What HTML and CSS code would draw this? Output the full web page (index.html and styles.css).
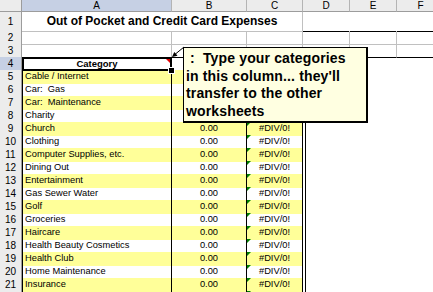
FILE: index.html
```html
<!DOCTYPE html>
<html>
<head>
  <title>Out of Pocket and Credit Card Expenses</title>
  <link rel="stylesheet" href="styles.css">
</head>
<body>
  <div class="sheet">
    <div class="row head">
      <div class="corner"></div>
      <div class="col sel">A</div>
      <div class="col">B</div>
      <div class="col">C</div>
      <div class="col">D</div>
      <div class="col">E</div>
      <div class="col">F</div>
    </div>

    <div class="row r1">
      <div class="num">1</div>
      <div class="cell title">Out of Pocket and Credit Card Expenses</div>
      <div class="cell side"></div>
    </div>
    <div class="row">
      <div class="num">2</div>
      <div class="cell"></div><div class="cell"></div><div class="cell"></div>
      <div class="cell"></div><div class="cell"></div><div class="cell"></div>
    </div>
    <div class="row r3">
      <div class="num">3</div>
      <div class="cell"></div><div class="cell"></div><div class="cell"></div>
      <div class="cell"></div><div class="cell"></div><div class="cell"></div>
    </div>

    <div class="row r4">
      <div class="num sel">4</div>
      <div class="cell a active">Category</div>
      <div class="cell b"></div>
      <div class="cell c"></div>
      <div class="edge"></div><div></div><div></div>
    </div>

    <div class="row alt">
      <div class="num">5</div>
      <div class="cell a">Cable / Internet</div><div class="cell b">0.00</div><div class="cell c">#DIV/0!</div>
      <div class="edge"></div><div></div><div></div>
    </div>
    <div class="row">
      <div class="num">6</div>
      <div class="cell a">Car:&nbsp; Gas</div><div class="cell b">0.00</div><div class="cell c">#DIV/0!</div>
      <div class="edge"></div><div></div><div></div>
    </div>
    <div class="row alt">
      <div class="num">7</div>
      <div class="cell a">Car:&nbsp; Maintenance</div><div class="cell b">0.00</div><div class="cell c">#DIV/0!</div>
      <div class="edge"></div><div></div><div></div>
    </div>
    <div class="row">
      <div class="num">8</div>
      <div class="cell a">Charity</div><div class="cell b">0.00</div><div class="cell c">#DIV/0!</div>
      <div class="edge"></div><div></div><div></div>
    </div>
    <div class="row alt">
      <div class="num">9</div>
      <div class="cell a">Church</div><div class="cell b">0.00</div><div class="cell c">#DIV/0!</div>
      <div class="edge"></div><div></div><div></div>
    </div>
    <div class="row">
      <div class="num">10</div>
      <div class="cell a">Clothing</div><div class="cell b">0.00</div><div class="cell c">#DIV/0!</div>
      <div class="edge"></div><div></div><div></div>
    </div>
    <div class="row alt">
      <div class="num">11</div>
      <div class="cell a">Computer Supplies, etc.</div><div class="cell b">0.00</div><div class="cell c">#DIV/0!</div>
      <div class="edge"></div><div></div><div></div>
    </div>
    <div class="row">
      <div class="num">12</div>
      <div class="cell a">Dining Out</div><div class="cell b">0.00</div><div class="cell c">#DIV/0!</div>
      <div class="edge"></div><div></div><div></div>
    </div>
    <div class="row alt">
      <div class="num">13</div>
      <div class="cell a">Entertainment</div><div class="cell b">0.00</div><div class="cell c">#DIV/0!</div>
      <div class="edge"></div><div></div><div></div>
    </div>
    <div class="row">
      <div class="num">14</div>
      <div class="cell a">Gas Sewer Water</div><div class="cell b">0.00</div><div class="cell c">#DIV/0!</div>
      <div class="edge"></div><div></div><div></div>
    </div>
    <div class="row alt">
      <div class="num">15</div>
      <div class="cell a">Golf</div><div class="cell b">0.00</div><div class="cell c">#DIV/0!</div>
      <div class="edge"></div><div></div><div></div>
    </div>
    <div class="row">
      <div class="num">16</div>
      <div class="cell a">Groceries</div><div class="cell b">0.00</div><div class="cell c">#DIV/0!</div>
      <div class="edge"></div><div></div><div></div>
    </div>
    <div class="row alt">
      <div class="num">17</div>
      <div class="cell a">Haircare</div><div class="cell b">0.00</div><div class="cell c">#DIV/0!</div>
      <div class="edge"></div><div></div><div></div>
    </div>
    <div class="row">
      <div class="num">18</div>
      <div class="cell a">Health Beauty Cosmetics</div><div class="cell b">0.00</div><div class="cell c">#DIV/0!</div>
      <div class="edge"></div><div></div><div></div>
    </div>
    <div class="row alt">
      <div class="num">19</div>
      <div class="cell a">Health Club</div><div class="cell b">0.00</div><div class="cell c">#DIV/0!</div>
      <div class="edge"></div><div></div><div></div>
    </div>
    <div class="row">
      <div class="num">20</div>
      <div class="cell a">Home Maintenance</div><div class="cell b">0.00</div><div class="cell c">#DIV/0!</div>
      <div class="edge"></div><div></div><div></div>
    </div>
    <div class="row alt">
      <div class="num">21</div>
      <div class="cell a">Insurance</div><div class="cell b">0.00</div><div class="cell c">#DIV/0!</div>
      <div class="edge"></div><div></div><div></div>
    </div>
    <div class="row">
      <div class="num">22</div>
      <div class="cell a"></div><div class="cell b"></div><div class="cell c"></div>
      <div class="edge"></div><div></div><div></div>
    </div>

    <!-- comment attached to A4 -->
    <svg class="pointer" width="18" height="16" viewBox="0 0 18 16">
      <line x1="5" y1="12" x2="16" y2="3" stroke="#000" stroke-width="1"/>
      <polygon points="4,13 9.5,11.8 6.3,7.9" fill="#000"/>
    </svg>
    <div class="note">&nbsp;:&nbsp; Type your categories<br>in this column... they'll<br>transfer to the other<br>worksheets</div>
  </div>
</body>
</html>
```

FILE: styles.css
```css
* {
  box-sizing: border-box;
}
body {
  margin: 0;
  background: #fff;
  overflow: hidden;
  font-family: "Liberation Sans", Arial, sans-serif;
}
.sheet {
  position: relative;
  width: 445px;
}
.row {
  display: grid;
  grid-template-columns: 22px 150px 75px 56px 47px 47px 48px;
  height: 13px;
}
.head {
  height: 12px;
}
.r1 {
  height: 19px;
}

/* headers */
.corner, .col, .num {
  background: #ececec;
  color: #000;
  font-size: 10px;
  text-align: center;
}
.corner {
  border-right: 1px solid #9c9c9c;
  border-bottom: 1px solid #9c9c9c;
}
.col {
  line-height: 11px;
  border-right: 1px solid #b4b4b4;
  border-bottom: 1px solid #9c9c9c;
}
.num {
  line-height: 13px;
  border-right: 1px solid #9c9c9c;
  border-bottom: 1px solid #c8c8c8;
}
.r1 .num {
  line-height: 19px;
}
.sel {
  background: #c6d0e4;
}

/* cells */
.cell {
  border-right: 1px solid #c0c0c0;
  border-bottom: 1px solid #c0c0c0;
  padding: 0 2px;
  font-size: 9.3px;
  line-height: 13px;
  white-space: nowrap;
  overflow: hidden;
}
.title {
  grid-column: 2 / 5;
  font-size: 12px;
  font-weight: bold;
  line-height: 19px;
  text-align: center;
}
.side {
  grid-column: 5 / 8;
  border-right: none;
  border-bottom-color: #000;
}
.r3 .cell {
  border-bottom-color: #000;
}

/* category table */
.a, .b, .c {
  border-right-color: #000;
  border-bottom: none;
}
.a {
  border-left: 1px solid #000;
}
.b, .c {
  text-align: center;
}
.c {
  position: relative;
}
.c::before {
  content: "";
  position: absolute;
  top: 0;
  left: 0;
  border-top: 4px solid #008000;
  border-right: 4px solid transparent;
}
.r4 .cell {
  border-bottom: 1px solid #000;
}
.r4 .c::before {
  display: none;
}
.alt .a, .alt .b, .alt .c {
  background: #ffff99;
}
.edge {
  margin-left: 2px;
  border-left: 1px solid #000;
}

.active {
  position: relative;
  border: 2px solid #000 !important;
  font-weight: bold;
  font-size: 9.5px;
  line-height: 9px;
  text-align: center;
  overflow: visible;
}
.active::before {
  content: "";
  position: absolute;
  top: 0;
  right: 0;
  border-top: 4px solid #e00000;
  border-left: 4px solid transparent;
}
.active::after {
  content: "";
  position: absolute;
  right: -4px;
  bottom: -4px;
  width: 5px;
  height: 5px;
  background: #000;
  outline: 1px solid #fff;
}

/* comment box */
.pointer {
  position: absolute;
  left: 168px;
  top: 44px;
}
.note {
  position: absolute;
  left: 183px;
  top: 47px;
  width: 185px;
  height: 76px;
  padding: 2px 0 0 2px;
  background: #ffffe1;
  border: 1px solid #000;
  border-right-width: 2px;
  border-bottom-width: 2px;
  font-size: 14px;
  font-weight: bold;
  line-height: 17.7px;
  letter-spacing: 0.15px;
  white-space: nowrap;
  overflow: hidden;
}
```
